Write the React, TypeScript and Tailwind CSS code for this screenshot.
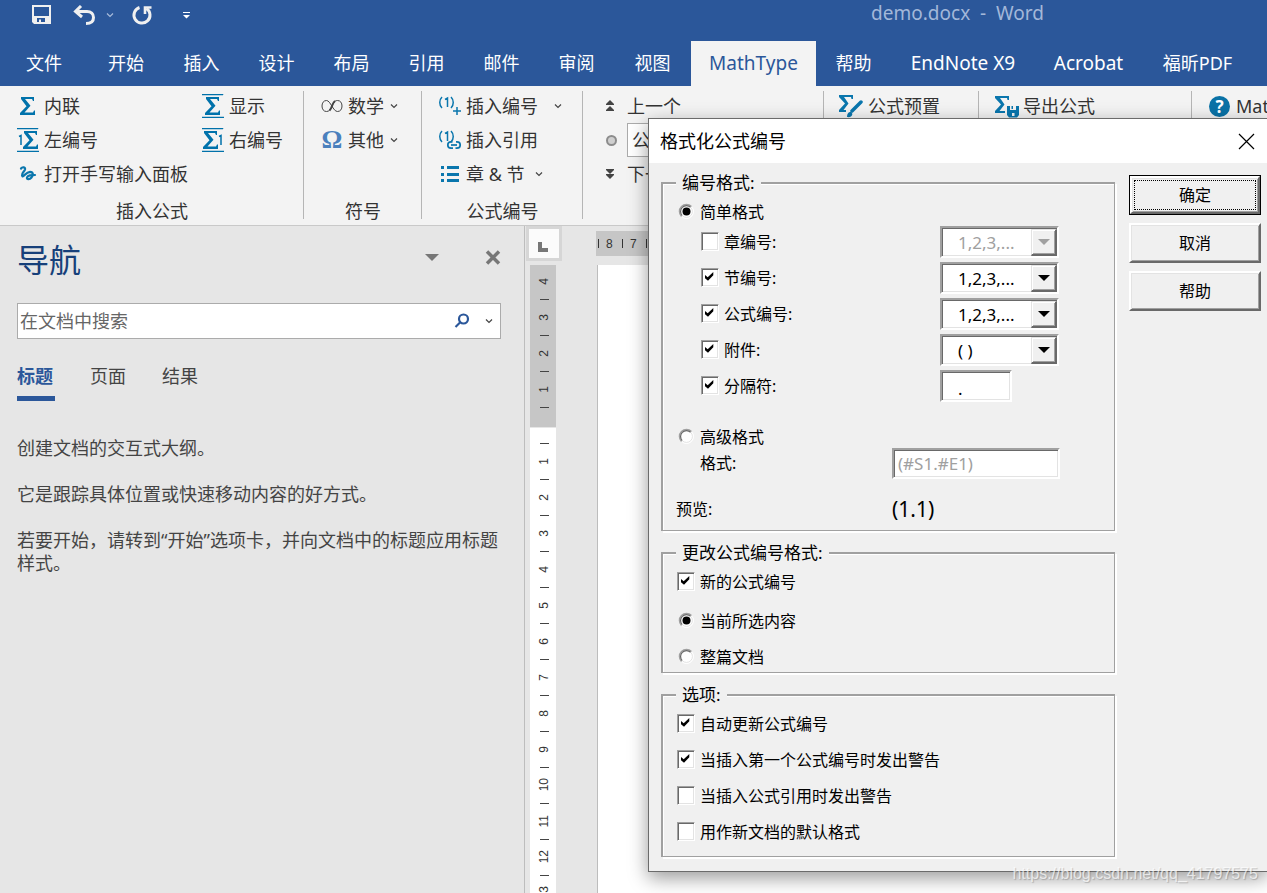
import type { ReactNode } from "react";

const FONT = 'font-["Noto_Sans","Noto_Sans_CJK_SC",sans-serif]';

/* ---------- icons ---------- */

const SIGMA = "M1 0H14V4H13L12 2H5L10.5 8.8L4.5 15.5H13L14 13.5H15V18H0V16L6.5 9.2L1 2Z";

function SigmaIcon({ bars = false, one }: { bars?: boolean; one?: "left" | "right" }) {
  const shift = one === "left" ? 6 : one === "right" ? 1 : 3;
  return (
    <svg width="22" height="24" viewBox="0 0 22 24" fill="#0072ab" className="shrink-0">
      <g transform={`translate(${shift} 3)`}>
        <path d={SIGMA} />
      </g>
      {bars && <path d="M0 0H21V1H0ZM0 23H22V24H0Z" stroke="#0072ab" strokeWidth="0.5" />}
      {one === "left" && <path d="M2 8.5L4 7.5V17" fill="none" stroke="#0072ab" strokeWidth="1.5" />}
      {one === "right" && <path d="M17 8.5L19 7.5V17" fill="none" stroke="#0072ab" strokeWidth="1.5" />}
    </svg>
  );
}

function PenScribbleIcon() {
  return (
    <svg width="22" height="24" viewBox="0 0 22 24" fill="none" stroke="#0a76ad" strokeWidth="2.2" strokeLinecap="round" className="shrink-0">
      <path d="M4 6.500C5.500 4.500 8.500 5 8 7.500C7.500 9.500 4.500 11 5 13.500C6 16.500 8.500 10 13 9.800C16.500 10 16.500 13.500 14.500 15.500C12.500 18 9.500 17.500 10 15.500C11 13 14 13 18 13" />
    </svg>
  );
}

function InfinityIcon() {
  return (
    <svg width="22" height="14" viewBox="0 0 22 14" fill="none" stroke="#444" className="shrink-0">
      <path d="M11 8C9.500 10.500 8 12.500 5.500 12.500C2.500 12.500 1 10 1 7C1 4 2.500 1.500 5.500 1.500C9.500 1.500 12 12.500 16.500 12.500C19.500 12.500 21 10 21 7C21 4 19.500 1.500 16.500 1.500C13 1.500 11.500 5 11 8Z" />
      <path d="M8.500 11.500C11.500 9 10.500 4.500 14 2" strokeWidth="2" />
    </svg>
  );
}

function NumberIcon({ kind }: { kind: "plus" | "link" }) {
  return (
    <svg width="23" height="20" viewBox="0 0 23 20" fill="none" stroke="#0a76ad" strokeWidth="1.500" className="shrink-0">
      <path d="M4 1C1 4 1 9 4 12M7 3.500L9.500 2V11M13 1C16 4 16 9 13 12" />
      {kind === "plus" ? (
        <path d="M15 15H23M19 11V19" />
      ) : (
        <g strokeWidth="1.700">
          <path d="M14.500 11.800H13A3.200 3.200 0 0 0 13 18.200H15M18 11.800H19A3.200 3.200 0 0 1 19 18.200H17.500" />
          <path d="M13 15H19" />
        </g>
      )}
    </svg>
  );
}

function ListIcon() {
  return (
    <svg width="20" height="18" viewBox="0 0 20 18" fill="#0a76ad" className="shrink-0">
      <path d="M1 1H4V4H1ZM7 1H19V4H7ZM1 8H4V11H1ZM7 8H19V11H7ZM1 14H4V17H1ZM7 14H19V17H7Z" />
    </svg>
  );
}

function DoubleArrow({ down = false }: { down?: boolean }) {
  return (
    <svg width="10" height="12" viewBox="0 0 10 12" fill="#444" className="shrink-0">
      {down ? (
        <path d="M1 1H9V2L5 6L1 2ZM1 6H9V7L5 11L1 7Z" />
      ) : (
        <path d="M5 0L9 4V5H1V4ZM5 6L9 10V11H1V10Z" />
      )}
    </svg>
  );
}

function SigmaBrushIcon() {
  return (
    <svg width="24" height="24" viewBox="0 0 24 24" fill="#0a76ad" className="shrink-0">
      <path d="M0 1H14V5H12.500L12 3H5L9.500 9.500L4.500 16H7V18H0V16L6 9.500L0 3Z" />
      <path d="M22 8L13 17" stroke="#0a76ad" strokeWidth="3.500" strokeLinecap="round" />
      <path d="M8 23C8 19 10 17.500 12 18C14.500 19.500 13.500 24 8 23Z" />
    </svg>
  );
}

function SigmaSaveIcon() {
  return (
    <svg width="24" height="24" viewBox="0 0 24 24" fill="#0a76ad" className="shrink-0">
      <path d="M0 2H14V6H12.500L12 4H5L9.500 10.500L4.500 17H10V19H0V17L6 10.500L0 4Z" />
      <path fillRule="evenodd" d="M12 12H24V21L22 23.500H14L12 21ZM15 12V16H21V12ZM17 19V22H19.500V19Z" />
      <path d="M16.500 12H18V15H16.500Z" />
    </svg>
  );
}

function Chevron({ className = "text-[#444]" }: { className?: string }) {
  return (
    <svg width="8" height="6" viewBox="0 0 8 6" fill="none" stroke="currentColor" strokeWidth="1.200" className={`shrink-0 ${className}`}>
      <path d="M1 1.500L4 4.500L7 1.500" />
    </svg>
  );
}

/* ---------- title bar and tabs ---------- */

function TitleBar() {
  return (
    <div className="flex h-[41px] items-start pl-[31px] text-[#f0f0f0]">
      <button aria-label="保存" className="mt-[4px]">
        <svg width="20" height="20" viewBox="0 0 20 20" fill="currentColor">
          <path fillRule="evenodd" d="M1 1H20V20H3L1 18ZM3 3V12H18V3ZM6 14V18H8V15.500H10V18H14V14Z" />
        </svg>
      </button>
      <button aria-label="撤消" className="mt-[5px] ml-[22px]">
        <svg width="24" height="20" viewBox="0 0 24 20" fill="none" stroke="currentColor" strokeWidth="3">
          <path d="M8 1L2.500 6.500L9 12M3 6.500H14C18 6.500 20.500 9 20.500 12.500C20.500 16 18 18.500 13 18.500" />
        </svg>
      </button>
      <button aria-label="撤消选项" className="mt-[12px] ml-[9px] flex">
        <Chevron className="text-[#a9bcdb]" />
      </button>
      <button aria-label="重复" className="mt-[4px] ml-[17px]">
        <svg width="22" height="22" viewBox="0 0 22 22" fill="none" stroke="currentColor" strokeWidth="3">
          <path d="M8.500 3.500A8 8 0 1 0 15.500 4.500" />
          <path d="M14 10V3.500H20.500" strokeWidth="2.600" />
        </svg>
      </button>
      <button aria-label="自定义快速访问工具栏" className="mt-[11px] ml-[29px]">
        <svg width="10" height="8" viewBox="0 0 10 8" fill="#fff">
          <path d="M1 1H8V2H1ZM1 4H8L4.500 7.500Z" />
        </svg>
      </button>
      <h1 className="mr-[223px] ml-auto text-[19px] leading-[27px] whitespace-pre text-[#a3b8d9]">demo.docx  -  Word</h1>
    </div>
  );
}

const TABS: { label: string; width: string; size?: string }[] = [
  { label: "文件", width: "w-[88px]" },
  { label: "开始", width: "w-[76px]" },
  { label: "插入", width: "w-[75px]" },
  { label: "设计", width: "w-[75px]" },
  { label: "布局", width: "w-[75px]" },
  { label: "引用", width: "w-[75px]" },
  { label: "邮件", width: "w-[75px]" },
  { label: "审阅", width: "w-[75px]" },
  { label: "视图", width: "w-[77px]" },
  { label: "MathType", width: "w-[125px]", size: "text-[19px]" },
  { label: "帮助", width: "w-[75px]" },
  { label: "EndNote X9", width: "w-[144px]", size: "text-[19px]" },
  { label: "Acrobat", width: "w-[107px]", size: "text-[19px]" },
  { label: "福昕PDF", width: "w-[111px]" },
];

function TabBar() {
  return (
    <nav className="flex h-[45px]">
      {TABS.map((t) => (
        <button
          key={t.label}
          className={`shrink-0 whitespace-nowrap ${t.size ?? "text-[18px]"} ${t.width} ${
            t.label === "MathType" ? "bg-[#f3f3f3] text-[#2b579a]" : "text-white"
          }`}
        >
          {t.label}
        </button>
      ))}
    </nav>
  );
}

/* ---------- ribbon ---------- */

function Group({ width, label, children }: { width: string; label?: string; children: ReactNode }) {
  return (
    <section className={`relative flex shrink-0 flex-col pt-[3px] ${width}`}>
      <div className="flex-1">{children}</div>
      <div className="h-[27px] text-center leading-[27px]">{label}</div>
      <span className="absolute top-[5px] right-0 h-[128px] w-px bg-[#b5b5b5]" />
    </section>
  );
}

function Cmd({ icon, label, chevron, gap = "ml-[6px]" }: { icon: ReactNode; label: string; chevron?: string; gap?: string }) {
  return (
    <button className="flex h-[34px] items-center whitespace-nowrap">
      {icon}
      <span className={gap}>{label}</span>
      {chevron && (
        <span className={chevron}>
          <Chevron />
        </span>
      )}
    </button>
  );
}

function Ribbon() {
  return (
    <div className="flex h-[140px] overflow-hidden border-b border-[#c9c9c9] bg-[#f3f3f3] text-[18px] text-[#333]">
      <Group width="w-[304px]" label="插入公式">
        <div className="grid grid-cols-[185px_1fr] pl-[17px]">
          <Cmd icon={<SigmaIcon />} label="内联" gap="ml-[5px]" />
          <Cmd icon={<SigmaIcon bars />} label="显示" gap="ml-[5px]" />
          <Cmd icon={<SigmaIcon bars one="left" />} label="左编号" gap="ml-[5px]" />
          <Cmd icon={<SigmaIcon bars one="right" />} label="右编号" gap="ml-[5px]" />
          <Cmd icon={<PenScribbleIcon />} label="打开手写输入面板" gap="ml-[5px]" />
        </div>
      </Group>
      <Group width="w-[118px]" label="符号">
        <div className="pl-[17px]">
          <Cmd icon={<InfinityIcon />} label="数学" chevron="ml-[6px]" gap="ml-[5px]" />
          <Cmd
            icon={
              <span className='w-[22px] text-center font-["Liberation_Serif",serif] text-[26px] leading-[34px] font-bold text-[#4a80bd]'>Ω</span>
            }
            label="其他"
            chevron="ml-[6px]"
            gap="ml-[5px]"
          />
        </div>
      </Group>
      <Group width="w-[161px]" label="公式编号">
        <div className="pl-[16px]">
          <Cmd icon={<NumberIcon kind="plus" />} label="插入编号" chevron="ml-[16px]" gap="ml-[5px]" />
          <Cmd icon={<NumberIcon kind="link" />} label="插入引用" gap="ml-[5px]" />
          <Cmd
            icon={
              <span className="flex w-[23px] pl-[2px]">
                <ListIcon />
              </span>
            }
            label="章 & 节"
            chevron="ml-[10px]"
            gap="ml-[5px]"
          />
        </div>
      </Group>
      <Group width="w-[241px]">
        <div className="pl-[22px]">
          <Cmd icon={<DoubleArrow />} label="上一个" gap="ml-[12px]" />
          <div className="flex h-[34px] items-center gap-[10px]">
            <span className="ml-[1px] h-[11px] w-[11px] shrink-0 rounded-full border-2 border-[#8c8c8c] bg-[#cfcfcf]" />
            <select aria-label="浏览对象" className="h-[34px] w-[180px] appearance-none border border-[#ababab] bg-white pl-[4px]">
              <option>公式</option>
            </select>
          </div>
          <Cmd icon={<DoubleArrow down />} label="下一个" gap="ml-[12px]" />
        </div>
      </Group>
      <Group width="w-[155px]">
        <div className="pl-[15px]">
          <Cmd icon={<SigmaBrushIcon />} label="公式预置" gap="ml-[5px]" />
        </div>
      </Group>
      <Group width="w-[213px]">
        <div className="pl-[16px]">
          <Cmd icon={<SigmaSaveIcon />} label="导出公式" gap="ml-[4px]" />
        </div>
      </Group>
      <div className="min-w-0 flex-1 overflow-hidden pt-[3px] pl-[17px]">
        <Cmd
          icon={
            <span className="flex h-[21px] w-[21px] shrink-0 items-center justify-center rounded-full bg-[#0a72a6] text-[17px] leading-[21px] font-bold text-white">
              ?
            </span>
          }
          label="MathType"
        />
      </div>
    </div>
  );
}

/* ---------- navigation pane ---------- */

function NavPane() {
  return (
    <aside className="w-[525px] shrink-0 border-r border-[#bdbdbd] px-[17px] text-[18px] text-[#444]">
      <div className="flex h-[77px] items-start">
        <h2 className="pt-[10px] text-[32px] leading-[48px] text-[#17407a]">导航</h2>
        <button aria-label="窗格选项" className="mt-[28px] ml-auto">
          <svg width="14" height="8" viewBox="0 0 14 8" fill="#777">
            <path d="M0 0H14L7 7Z" />
          </svg>
        </button>
        <button aria-label="关闭导航窗格" className="mt-[24px] mr-[6px] ml-[46px]">
          <svg width="16" height="15" viewBox="0 0 16 15" fill="none" stroke="#777" strokeWidth="3.500">
            <path d="M2 1.500L14 13.500M14 1.500L2 13.500" />
          </svg>
        </button>
      </div>
      <div className="flex h-[36px] w-[484px] items-center border border-[#ababab] bg-white">
        <input
          aria-label="在文档中搜索"
          placeholder="在文档中搜索"
          className="h-full min-w-0 flex-1 pl-[2px] outline-none placeholder:text-[#666]"
        />
        <button aria-label="搜索">
          <svg width="16" height="16" viewBox="0 0 16 16" fill="none" stroke="#2b579a" strokeWidth="2.200">
            <circle cx="9.500" cy="6" r="4.500" />
            <path d="M6 9.500L1.500 14" />
          </svg>
        </button>
        <button aria-label="搜索选项" className="mr-[7px] ml-[15px]">
          <Chevron />
        </button>
      </div>
      <div className="mt-[19px] flex gap-[34px] leading-[36px]">
        <button className="h-[43px] w-[38px] border-b-5 border-[#2b579a] pb-[2px] text-left font-bold text-[#2b579a]">标题</button>
        <button className="h-[36px] w-[38px] leading-[34px]">页面</button>
        <button className="h-[36px] w-[38px] leading-[34px]">结果</button>
      </div>
      <div className="mt-[36px] -mr-[10px] flex flex-col gap-[23px] pr-[8px] leading-[23px]">
        <p>创建文档的交互式大纲。</p>
        <p>它是跟踪具体位置或快速移动内容的好方式。</p>
        <p>若要开始，请转到“开始”选项卡，并向文档中的标题应用标题样式。</p>
      </div>
    </aside>
  );
}

/* ---------- document area ---------- */

function VMark({ value }: { value?: number }) {
  return (
    <div className="flex h-[18px] shrink-0 items-center justify-center">
      {value === undefined ? (
        <span className="ml-[3px] h-px w-[9px] bg-[#444]" />
      ) : (
        <span className="ml-[2px] rotate-180 leading-[14px] [writing-mode:vertical-rl]">{value}</span>
      )}
    </div>
  );
}

function DocumentArea() {
  return (
    <main className="flex min-w-0 flex-1">
      <div className="flex w-[37px] shrink-0 flex-col pl-[1px]">
        <div className="h-[35px] w-[36px] border-3 border-[#d6d6d6] bg-[#fbfbfb] pt-[13px] pl-[9px]">
          <span className="block h-[10px] w-[10px] border-b-4 border-l-4 border-[#777]" />
        </div>
        <div className='mt-[4px] ml-[4px] flex min-h-0 w-[26px] flex-1 flex-col overflow-hidden font-["Liberation_Sans",sans-serif] text-[12px] text-[#333]'>
          <div className="h-[162px] shrink-0 bg-[#c6c6c6] pt-[7px]">
            {[4, 3, 2, 1].map((n) => (
              <div key={n}>
                <VMark value={n} />
                <VMark />
              </div>
            ))}
          </div>
          <div className="mt-px flex-1 bg-white pt-[6px]">
            {[1, 2, 3, 4, 5, 6, 7, 8, 9, 10, 11, 12, 13].map((n) => (
              <div key={n}>
                <VMark />
                <VMark value={n} />
              </div>
            ))}
          </div>
        </div>
      </div>
      <div className="ml-[34px] flex min-w-0 flex-1 flex-col pt-[5px]">
        <div className='flex h-[25px] items-center bg-[#c6c6c6] pl-[2px] font-["Liberation_Sans",sans-serif] text-[12px] text-[#333]'>
          {[8, 7].map((n) => (
            <span key={n} className="flex w-[24px] items-center gap-[7px]">
              <span className="h-[9px] w-px bg-[#333]" />
              {n}
            </span>
          ))}
          <span className="h-[9px] w-px bg-[#333]" />
        </div>
        <div className="mt-[9px] ml-[1px] flex-1 border-l border-[#bdbdbd] bg-white" />
      </div>
    </main>
  );
}

/* ---------- dialog ---------- */

const SUNKEN =
  "border-2 border-t-[#a0a0a0] border-l-[#a0a0a0] border-r-white border-b-white shadow-[inset_1px_1px_0_#696969,inset_-1px_-1px_0_#e3e3e3] bg-white text-[17px]";

function Check({ label, checked = false }: { label: string; checked?: boolean }) {
  return (
    <label className="flex items-center gap-[5px]">
      <span className="relative flex h-[20px] w-[18px]">
        <input
          type="checkbox"
          defaultChecked={checked}
          className="peer h-[19px] w-[18px] appearance-none border border-t-[#a0a0a0] border-r-white border-b-white border-l-[#a0a0a0] bg-white shadow-[inset_1px_1px_0_#696969,inset_-1px_-1px_0_#e3e3e3]"
        />
        <svg viewBox="0 0 18 19" className="pointer-events-none absolute top-0 left-0 hidden h-[19px] w-[18px] peer-checked:block">
          <path d="M12.300 4V7.300L7 12.700L4 10.200V7L6.700 9.200Z" />
        </svg>
      </span>
      {label}
    </label>
  );
}

function Radio({ name, label, checked = false }: { name: string; label: string; checked?: boolean }) {
  return (
    <label className="flex items-center gap-[5px]">
      <span className="relative flex h-[20px] w-[18px]">
        <input type="radio" name={name} defaultChecked={checked} className="peer h-[18px] w-[18px] appearance-none rounded-full" />
        <svg viewBox="0 0 18 18" fill="none" className="pointer-events-none absolute top-0 left-0 h-[18px] w-[18px]">
          <circle cx="9.500" cy="9.500" r="7" fill="#fff" stroke="#fff" />
          <path d="M4.500 14.500A7 7 0 0 1 14.500 4.500" stroke="#a0a0a0" strokeWidth="1.400" />
          <path d="M5.300 13.700A5.900 5.900 0 0 1 13.700 5.300" stroke="#696969" strokeWidth="1.200" />
          <path d="M5.300 13.700A5.900 5.900 0 0 0 13.700 5.300" stroke="#e3e3e3" />
        </svg>
        <svg viewBox="0 0 18 18" className="pointer-events-none absolute top-0 left-0 hidden h-[18px] w-[18px] peer-checked:block">
          <circle cx="9.500" cy="9.500" r="4" />
        </svg>
      </span>
      {label}
    </label>
  );
}

function Combo({ label, value, disabled = false }: { label: string; value: string; disabled?: boolean }) {
  return (
    <span className="relative flex">
      <select
        aria-label={label}
        disabled={disabled}
        className={`h-[32px] w-[119px] appearance-none pt-[2px] pl-[16px] ${SUNKEN} ${disabled ? "text-[#a0a0a0] opacity-100" : "text-black"}`}
      >
        <option>{value}</option>
      </select>
      <span className="pointer-events-none absolute top-[3px] right-[2px] flex h-[27px] w-[26px] items-center justify-center border-t border-r-2 border-b-2 border-l border-t-[#e3e3e3] border-r-[#696969] border-b-[#696969] border-l-[#e3e3e3] bg-[#f0f0f0] shadow-[inset_1px_1px_0_#fff,inset_-1px_-1px_0_#a0a0a0]">
        <svg width="12" height="7" viewBox="0 0 12 7" fill={disabled ? "#a0a0a0" : "#000"}>
          <path d="M0 0H12L6 6Z" />
        </svg>
      </span>
    </span>
  );
}

function Box({ title, className, children }: { title: string; className: string; children: ReactNode }) {
  return (
    <fieldset className="min-w-0 border-t-2 border-r border-b border-l-2 border-[#a0a0a0] shadow-[inset_1px_1px_0_#fff,2px_2px_0_#fff]">
      <legend className="ml-[13px] bg-[#f0f0f0] px-[6px] text-[17px] leading-[22px]">{title}</legend>
      <div className={className}>{children}</div>
    </fieldset>
  );
}

const NUMBER_ROWS: { label: string; checked: boolean; value: string }[] = [
  { label: "章编号:", checked: false, value: "1,2,3,..." },
  { label: "节编号:", checked: true, value: "1,2,3,..." },
  { label: "公式编号:", checked: true, value: "1,2,3,..." },
  { label: "附件:", checked: true, value: "( )" },
];

const BUTTON =
  "h-[40px] w-[132px] border-t-2 border-l-2 border-r-2 border-b-2 border-t-white border-l-white border-r-[#696969] border-b-[#696969] bg-[#f0f0f0] shadow-[inset_1px_1px_0_#e3e3e3,inset_-1px_-1px_0_#a0a0a0]";

function FormatDialog() {
  return (
    <div
      role="dialog"
      aria-label="格式化公式编号"
      className="absolute top-[118px] right-0 left-[648px] border-t border-b border-l border-[#6b6b6b] bg-[#f0f0f0] text-[16px] leading-[24px] text-black shadow-[0_6px_18px_rgba(0,0,0,0.4)]"
    >
      <header className="flex h-[44px] items-center justify-between bg-white pr-[12px] pl-[11px] text-[18px]">
        <h2>格式化公式编号</h2>
        <button aria-label="关闭">
          <svg width="17" height="17" viewBox="0 0 17 17" fill="none" stroke="#000" strokeWidth="1.200">
            <path d="M1 1L16 16M16 1L1 16" />
          </svg>
        </button>
      </header>
      <div className="flex gap-[14px] pr-[6px] pb-[14px] pl-[12px]">
        <div className="flex min-w-0 flex-1 flex-col gap-[11px] pt-[9px]">
          <Box title="编号格式:" className="pb-[8px]">
            <div className="flex h-[30px] items-center pt-[5px] pl-[14px]">
              <Radio name="format" label="简单格式" checked />
            </div>
            {NUMBER_ROWS.map((r) => (
              <div key={r.label} className="flex h-[36px] items-center justify-between pr-[55px] pl-[38px]">
                <Check label={r.label} checked={r.checked} />
                <Combo label={r.label} value={r.value} disabled={!r.checked} />
              </div>
            ))}
            <div className="flex h-[36px] items-center justify-between pr-[55px] pl-[38px]">
              <Check label="分隔符:" checked />
              <span className="flex w-[119px]">
                <input aria-label="分隔符" defaultValue="." className={`h-[32px] w-[72px] pt-[4px] pl-[16px] ${SUNKEN}`} />
              </span>
            </div>
            <div className="mt-[20px] flex h-[26px] items-center pl-[14px]">
              <Radio name="format" label="高级格式" />
            </div>
            <div className="flex h-[26px] items-center justify-between pr-[54px] pl-[37px]">
              <label htmlFor="pattern">格式:</label>
              <input
                id="pattern"
                disabled
                defaultValue="(#S1.#E1)"
                className={`h-[31px] w-[168px] pl-[4px] text-[#a0a0a0] ${SUNKEN}`}
              />
            </div>
            <div className="mt-[20px] flex h-[26px] items-center justify-between pr-[54px] pl-[13px]">
              <span>预览:</span>
              <output className="w-[168px] text-[21px]">(1.1)</output>
            </div>
          </Box>
          <Box title="更改公式编号格式:" className="pl-[14px]">
            <div className="flex h-[36px] items-center">
              <Check label="新的公式编号" checked />
            </div>
            <div className="mt-[6px] flex h-[30px] items-center">
              <Radio name="scope" label="当前所选内容" checked />
            </div>
            <div className="mt-[6px] flex h-[30px] items-center">
              <Radio name="scope" label="整篇文档" />
            </div>
          </Box>
          <Box title="选项:" className="pb-[6px] pl-[14px]">
            <div className="flex h-[36px] items-center">
              <Check label="自动更新公式编号" checked />
            </div>
            <div className="flex h-[36px] items-center">
              <Check label="当插入第一个公式编号时发出警告" checked />
            </div>
            <div className="flex h-[36px] items-center">
              <Check label="当插入公式引用时发出警告" />
            </div>
            <div className="flex h-[36px] items-center">
              <Check label="用作新文档的默认格式" />
            </div>
          </Box>
        </div>
        <div className="flex shrink-0 flex-col gap-[8px] pt-[12px]">
          <div className="h-[40px] w-[132px] border border-black bg-[#f0f0f0]">
            <button className="h-full w-full border-2 border-t-white border-r-[#696969] border-b-[#696969] border-l-white p-[2px] shadow-[inset_1px_1px_0_#e3e3e3,inset_-1px_-1px_0_#a0a0a0]">
              <span className="flex h-full items-center justify-center border border-dotted border-black">确定</span>
            </button>
          </div>
          <button className={BUTTON}>取消</button>
          <button className={BUTTON}>帮助</button>
        </div>
      </div>
    </div>
  );
}

export default function App() {
  return (
    <div lang="zh-CN" className={`relative flex h-screen flex-col overflow-hidden bg-[#e6e6e6] ${FONT}`}>
      <header className="bg-[#2b579a]">
        <TitleBar />
        <TabBar />
      </header>
      <Ribbon />
      <div className="flex min-h-0 flex-1">
        <NavPane />
        <DocumentArea />
      </div>
      <FormatDialog />
      <span className='absolute right-[9px] bottom-[8px] font-["Liberation_Sans",sans-serif] text-[16px] leading-[22px] text-white/70 [text-shadow:1px_1px_1px_rgba(0,0,0,0.2)]'>
        https://blog.csdn.net/qq_41797575
      </span>
    </div>
  );
}
